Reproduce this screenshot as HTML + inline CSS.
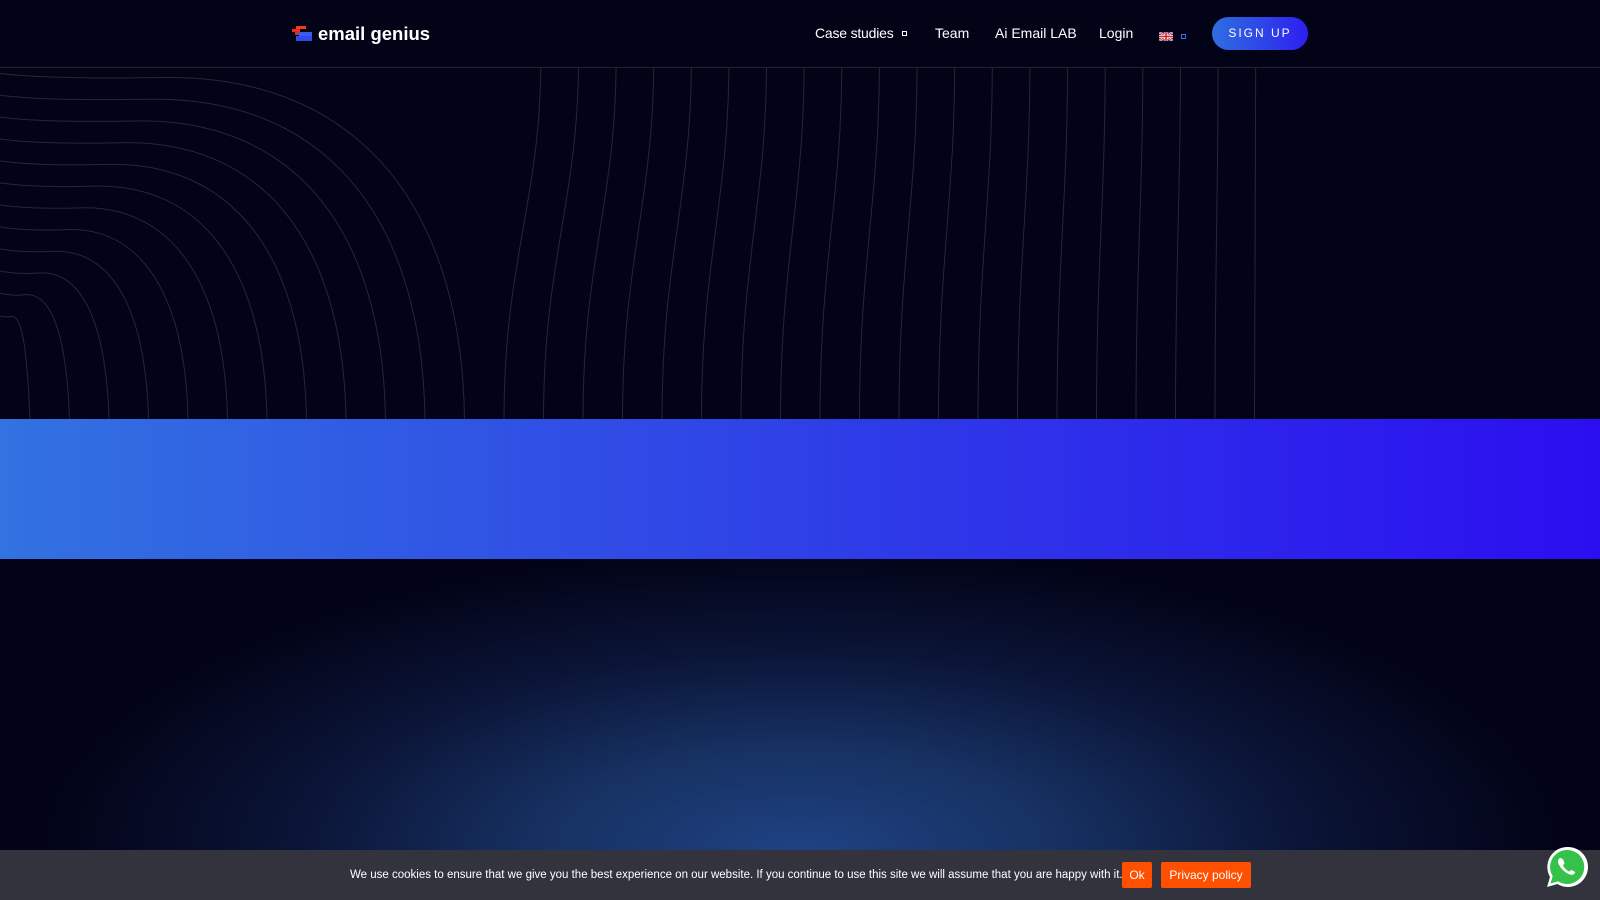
<!DOCTYPE html>
<html><head><meta charset="utf-8"><style>
*{margin:0;padding:0;box-sizing:border-box}
body{width:1600px;height:900px;overflow:hidden;background:#020316;font-family:"Liberation Sans",Arial,sans-serif;position:relative}
.hdr{position:absolute;left:0;top:0;width:1600px;height:68px;border-bottom:1px solid #23242f;background:#020316;z-index:3}
.logo{position:absolute;left:292px;top:23px;color:#fff;font-weight:bold;font-size:18.5px;display:flex;align-items:center;gap:6px}
.nav{position:absolute;top:25px;color:#fff;font-size:14px}
.sq{display:inline-block;width:5px;height:5px;border:1px solid #fff;margin-left:8px;vertical-align:2px}
.btn{position:absolute;left:1212px;top:17px;width:96px;height:33px;border-radius:17px;background:linear-gradient(90deg,#2f6ee0,#2d1ff0);color:#fff;font-size:12px;letter-spacing:2px;text-align:center;line-height:33px}
.band{position:absolute;left:0;top:419px;width:1600px;height:140px;background:linear-gradient(90deg,#3272e1,#2f45e6 45%,#2b0ef0)}
.glow{position:absolute;left:0;top:559px;width:1600px;height:291px;background:radial-gradient(ellipse 760px 300px at 800px 290px,#1f4283 0%,#163060 35%,#0b1538 65%,#020316 100%)}
.cookie{position:absolute;left:0;top:850px;width:1600px;height:50px;background:#32333d;color:#fff;font-size:11.5px}
.ck{position:absolute;left:350px;top:19px}
.b{position:absolute;top:12px;height:26px;background:#ff4f00;border-radius:2px;color:#fff;font-size:12px;line-height:26px;text-align:center}
</style></head><body>
<svg id="w" style="position:absolute;left:0;top:68px" width="1600" height="351" viewBox="0 68 1600 351"></svg>
<div class="hdr">
 <div class="logo"><svg width="20" height="16" viewBox="0 0 20 16"><rect x="4" y="0" width="10" height="3" fill="#f23a1c"/><rect x="0" y="3" width="8" height="3" fill="#e92a20"/><rect x="3" y="6" width="4" height="3" fill="#c9342f"/><rect x="7" y="6" width="13" height="4" fill="#3b5bf0"/><rect x="4" y="10" width="16" height="5" fill="#2f4bf0"/></svg>email genius</div>
 <div class="nav" style="left:815px;letter-spacing:-0.2px">Case studies<span class="sq"></span></div>
 <div class="nav" style="left:935px">Team</div>
 <div class="nav" style="left:995px">Ai Email LAB</div>
 <div class="nav" style="left:1099px">Login</div>
 <div class="nav" style="left:1159px;top:28px"><svg width="14" height="9" viewBox="0 0 14 9"><rect width="14" height="9" fill="#2a3f8f"/><path d="M0 0L14 9M14 0L0 9" stroke="#fff" stroke-width="2"/><path d="M0 0L14 9M14 0L0 9" stroke="#d22" stroke-width=".8"/><rect x="5.5" width="3" height="9" fill="#fff"/><rect y="3" width="14" height="3" fill="#fff"/><rect x="6.2" width="1.6" height="9" fill="#d22"/><rect y="3.7" width="14" height="1.6" fill="#d22"/></svg><span class="sq" style="border-color:#3b6cf0"></span></div>
 <div class="btn">SIGN UP</div>
</div>
<div class="band"></div>
<div class="glow"></div>
<div class="cookie"><span class="ck">We use cookies to ensure that we give you the best experience on our website. If you continue to use this site we will assume that you are happy with it.</span>
<div class="b" style="left:1122px;width:30px">Ok</div>
<div class="b" style="left:1161px;width:90px">Privacy policy</div>
</div>
<svg style="position:absolute;left:1545px;top:845px" width="44" height="44" viewBox="0 0 44 44"><path d="M22 2a20 20 0 0 0-17 30L2 42l10.5-3A20 20 0 1 0 22 2z" fill="#fff"/><path d="M22 5a17 17 0 0 0-14.3 26L5.5 38.5l7.7-2.1A17 17 0 1 0 22 5z" fill="#34c24a"/><path d="M15.5 13c-1 0-2.5 1.3-2.5 3.4 0 4.5 7.5 13 13.7 13.4 2 .1 3.4-1.4 3.4-2.5 0-.6-3.2-2.3-3.8-2.3-.6 0-1.3 1.5-2 1.5-1.5 0-6.2-4.5-6.2-6.2 0-.7 1.4-1.3 1.4-2 0-.6-1.5-5.3-4-5.3z" fill="#fff"/></svg>
<script>
var s='',svg=document.getElementById('w');
for(var i=0;i<32;i++){var xb=30+i*39.5;var d;
if(xb<480){var ye=330-xb*0.55;d='M'+xb+' 419 C'+(xb-3)+' '+(ye+(419-ye)*0.35)+' '+(xb*0.75)+' '+ye+' '+(xb*0.35)+' '+(ye+3)+' S -20 '+(ye-8)+' -40 '+(ye-6);}
else{var dx=38*(1-(xb-480)/800);d='M'+xb+' 419 C'+xb+' 260 '+(xb+dx)+' 200 '+(xb+dx)+' 60';}
s+='<path d="'+d+'" fill="none" stroke="#252738" stroke-width="1"/>';}
svg.innerHTML=s;
</script>
</body></html>
